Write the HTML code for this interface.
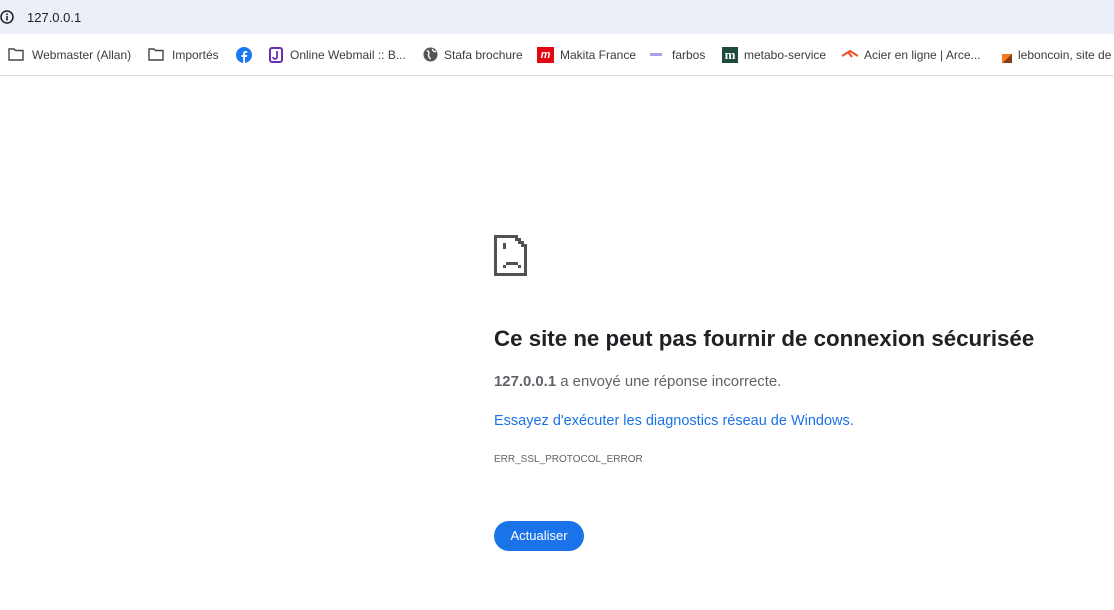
<!DOCTYPE html>
<html><head><meta charset="utf-8"><style>
body{margin:0;width:1114px;height:610px;background:#fff;font-family:"Liberation Sans",sans-serif;position:relative;overflow:hidden}
.addr{position:absolute;left:0;top:0;width:1114px;height:34px;background:#ebeff8}
.url{position:absolute;left:27px;top:10px;font-size:13px;color:#1f1f1f}
.bm{position:absolute;top:35px;left:0;width:1114px;height:40px;border-bottom:1px solid #dadce0}
.b{position:absolute;top:13px;font-size:12px;color:#3c3c3c;white-space:nowrap}
.ic{position:absolute;top:12px}
h1{position:absolute;left:494px;top:326px;margin:0;font-size:22.3px;font-weight:bold;color:#202124;white-space:nowrap}
p{margin:0;position:absolute;left:494px;white-space:nowrap}
.btn{position:absolute;left:494px;top:521px;width:90px;height:30px;border-radius:15px;background:#1a73e8;color:#fff;font-size:13px;text-align:center;line-height:30px}
</style></head><body>
<div class="addr"></div>
<svg style="position:absolute;left:0;top:10px" width="14" height="14" viewBox="0 0 14 14"><circle cx="7" cy="7" r="6" fill="none" stroke="#1f1f1f" stroke-width="1.5"/><rect x="6.2" y="6" width="1.6" height="4.5" fill="#1f1f1f"/><rect x="6.2" y="3.5" width="1.6" height="1.6" fill="#1f1f1f"/></svg>
<div class="url">127.0.0.1</div>
<div class="bm">
<svg class="ic" style="left:8px;top:13px" width="16" height="13" viewBox="0 0 16 13"><path d="M1 1h5l1.5 1.5H15V12H1Z" fill="none" stroke="#444" stroke-width="1.4"/></svg>
<div class="b" style="left:32px">Webmaster (Allan)</div>
<svg class="ic" style="left:148px;top:13px" width="16" height="13" viewBox="0 0 16 13"><path d="M1 1h5l1.5 1.5H15V12H1Z" fill="none" stroke="#444" stroke-width="1.4"/></svg>
<div class="b" style="left:172px">Importés</div>
<svg class="ic" style="left:236px" width="16" height="16" viewBox="0 0 16 16"><circle cx="8" cy="8" r="8" fill="#1877f2"/><path d="M9 16V10h2l.3-2H9V6.8c0-.6.3-1 1-1h1.3V4.1C11 4 10.4 4 9.8 4 8.3 4 7.2 4.9 7.2 6.5V8H5.5v2h1.7v6Z" fill="#fff"/></svg>
<svg class="ic" style="left:269px" width="14" height="16" viewBox="0 0 14 16"><rect x="1" y="1" width="12" height="14" rx="2" fill="none" stroke="#6b2fb3" stroke-width="2"/><path d="M8 4v6a2 2 0 0 1-4 0" fill="none" stroke="#6b2fb3" stroke-width="1.8"/></svg>
<div class="b" style="left:290px">Online Webmail :: B...</div>
<svg class="ic" style="left:423px" width="15" height="15" viewBox="0 0 16 16"><circle cx="8" cy="8" r="7.5" fill="#555"/><path d="M4 4c2 0 3 2 2 4s1 3 2 5M10 2c0 2 2 3 4 3" stroke="#fff" stroke-width="1.5" fill="none"/></svg>
<div class="b" style="left:444px">Stafa brochure</div>
<div class="ic" style="left:537px;width:17px;height:16px;background:#e30613;color:#fff;font-size:11px;font-weight:bold;font-style:italic;line-height:16px;text-align:center">m</div>
<div class="b" style="left:560px">Makita France</div>
<div class="ic" style="left:650px;top:18px;width:12px;height:3px;background:#a9a3d9"></div>
<div class="b" style="left:672px">farbos</div>
<div class="ic" style="left:722px;width:16px;height:16px;background:#1f4a3e;color:#fff;font-size:13px;font-weight:bold;line-height:15px;text-align:center;font-family:'Liberation Serif',serif">m</div>
<div class="b" style="left:744px">metabo-service</div>
<svg class="ic" style="left:842px;top:15px" width="16" height="8" viewBox="0 0 16 8"><path d="M0 6L8 1l8 5M6 2l4 5" stroke="#f04a1d" stroke-width="2" fill="none"/></svg>
<div class="b" style="left:864px">Acier en ligne | Arce...</div>
<div class="ic" style="left:1002px;top:19px;width:10px;height:9px;background:linear-gradient(135deg,#f47920 50%,#8a3b10 50%)"></div>
<div class="b" style="left:1018px">leboncoin, site de</div>
</div>
<svg style="position:absolute;left:494px;top:235px" width="33" height="41" viewBox="0 0 33 41" shape-rendering="crispEdges" fill="#525252">
<rect x="0" y="0" width="24" height="3"/><rect x="0" y="0" width="3" height="41"/><rect x="0" y="38" width="33" height="3"/><rect x="30" y="9" width="3" height="32"/>
<rect x="24" y="3" width="3" height="3"/><rect x="27" y="6" width="3" height="3"/>
<rect x="21" y="3" width="3" height="3"/><rect x="24" y="6" width="3" height="3"/><rect x="27" y="9" width="3" height="3"/>
<rect x="9" y="8" width="3" height="6"/>
<rect x="12" y="27" width="12" height="3"/><rect x="9" y="30" width="3" height="3"/><rect x="24" y="30" width="3" height="3"/>
</svg>
<h1>Ce site ne peut pas fournir de connexion sécurisée</h1>
<p style="top:374px;font-size:14.9px;color:#5f6368"><b>127.0.0.1</b> a envoyé une réponse incorrecte.</p>
<p style="top:413px;font-size:14.5px;color:#1a73e8">Essayez d'exécuter les diagnostics réseau de Windows.</p>
<p style="top:454px;font-size:10px;color:#5f6368">ERR_SSL_PROTOCOL_ERROR</p>
<div class="btn">Actualiser</div>
</body></html>
